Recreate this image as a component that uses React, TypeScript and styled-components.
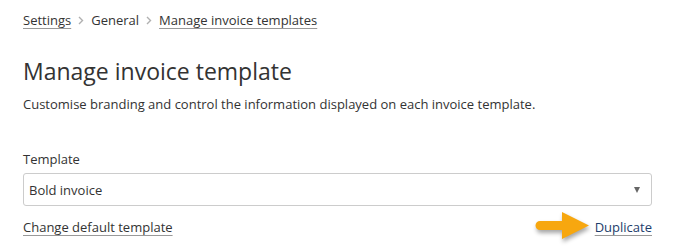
import React from 'react';
import styled, { createGlobalStyle } from 'styled-components';

const GlobalStyle = createGlobalStyle`
  html, body {
    margin: 0;
    padding: 0;
    background: #ffffff;
  }
  body {
    font-family: "Open Sans", "Liberation Sans", sans-serif;
    color: #333333;
  }
`;

const Page = styled.div`
  width: 681px;
  height: 249px;
  box-sizing: border-box;
  padding: 11px 29px 0 23px;
  overflow: hidden;
`;

const Breadcrumbs = styled.nav`
  display: flex;
  align-items: center;
  gap: 7px;
  font-size: 13px;
  line-height: 18px;
`;

const Crumb = styled.a`
  color: #333333;
  text-decoration: underline;
  text-decoration-color: #999999;
  text-underline-offset: 3px;
`;

const CrumbText = styled.span`
  color: #333333;
`;

const Chevron = styled.span`
  display: inline-flex;
  color: #b0b0b0;
`;

const Title = styled.h1`
  margin: 27px 0 0;
  font-size: 23px;
  font-weight: 400;
  line-height: 30px;
  color: #333333;
`;

const Description = styled.p`
  margin: 9px 0 0;
  font-size: 13px;
  line-height: 18px;
`;

const Field = styled.div`
  margin-top: 37px;
  display: flex;
  flex-direction: column;
`;

const Label = styled.label`
  font-size: 13px;
  line-height: 18px;
  margin-bottom: 5px;
`;

const Select = styled.div`
  height: 33px;
  box-sizing: border-box;
  border: 1px solid #cccccc;
  border-radius: 3px;
  display: flex;
  align-items: center;
  justify-content: space-between;
  padding: 0 11px 0 5px;
  font-size: 13px;
`;

const Caret = styled.span`
  width: 0;
  height: 0;
  border-left: 3.5px solid transparent;
  border-right: 3.5px solid transparent;
  border-top: 6px solid #666666;
`;

const Actions = styled.div`
  margin-top: 12px;
  display: flex;
  justify-content: space-between;
  align-items: center;
  font-size: 13px;
  line-height: 18px;
`;

const LinkText = styled.a<{ $blue?: boolean }>`
  color: ${({ $blue }) => ($blue ? '#1d3d6b' : '#333333')};
  text-decoration: underline;
  text-decoration-color: #999999;
  text-underline-offset: 3px;
`;

const RightGroup = styled.div`
  display: flex;
  align-items: center;
  gap: 3px;
`;

const ArrowIcon = styled.svg`
  display: block;
  margin: -7px 0 -7px;
  filter: drop-shadow(1px 3px 2px rgba(0, 0, 0, 0.35));
`;

const ChevronIcon = () => (
  <svg width="6" height="9" viewBox="0 0 6 9">
    <path d="M1 1 L4.5 4.5 L1 8" fill="none" stroke="currentColor" strokeWidth="1.4" />
  </svg>
);

const Arrow = () => (
  <ArrowIcon width="58" height="32" viewBox="0 0 58 32">
    <path
      d="M6 10 L28 10 L28 1 L55 14.5 L28 28 L28 19 L6 19 A4.5 4.5 0 0 1 6 10 Z"
      fill="#f7a70f"
    />
  </ArrowIcon>
);

const App = () => (
  <>
    <GlobalStyle />
    <Page>
      <Breadcrumbs>
        <Crumb>Settings</Crumb>
        <Chevron><ChevronIcon /></Chevron>
        <CrumbText>General</CrumbText>
        <Chevron><ChevronIcon /></Chevron>
        <Crumb>Manage invoice templates</Crumb>
      </Breadcrumbs>
      <Title>Manage invoice template</Title>
      <Description>
        Customise branding and control the information displayed on each invoice template.
      </Description>
      <Field>
        <Label>Template</Label>
        <Select>
          <span>Bold invoice</span>
          <Caret />
        </Select>
      </Field>
      <Actions>
        <LinkText>Change default template</LinkText>
        <RightGroup>
          <Arrow />
          <LinkText $blue>Duplicate</LinkText>
        </RightGroup>
      </Actions>
    </Page>
  </>
);

export default App;
